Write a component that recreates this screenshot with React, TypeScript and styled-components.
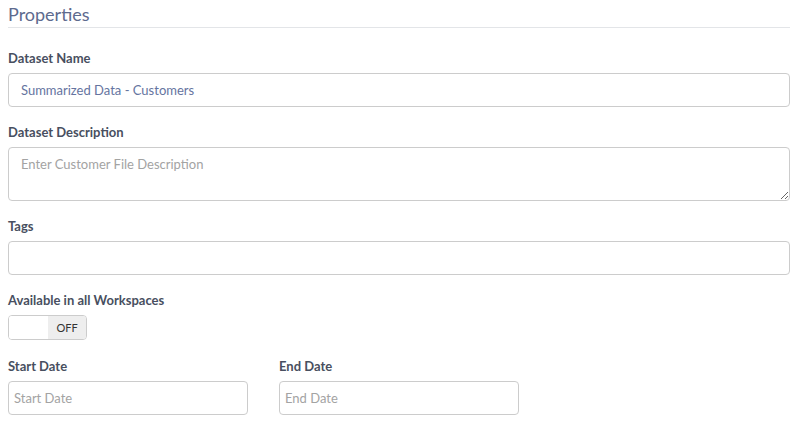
import React, { useState } from 'react';
import styled, { createGlobalStyle } from 'styled-components';

const GlobalStyle = createGlobalStyle`
  body {
    margin: 0;
    background: #ffffff;
    font-family: Lato, "Liberation Sans", sans-serif;
  }
  * {
    box-sizing: border-box;
  }
`;

const Container = styled.div`
  padding: 3px 10px 0px 8px;
  display: flex;
  flex-direction: column;
`;

const Title = styled.h3`
  margin: 0px;
  padding-bottom: 2px;
  font-size: 18px;
  font-weight: 400;
  line-height: 22px;
  color: #5d6a8e;
  border-bottom: 1px solid #e3e5e8;
`;

const Field = styled.div<{ $top?: number }>`
  display: flex;
  flex-direction: column;
  margin-top: ${(props) => props.$top ?? 17}px;
`;

const Label = styled.label`
  font-size: 13px;
  font-weight: 700;
  line-height: 16px;
  color: #484f60;
  margin-bottom: 7px;
`;

const Input = styled.input<{ $pad?: number }>`
  height: 34px;
  width: 100%;
  padding: 0px ${(props) => props.$pad ?? 12}px;
  border: 1px solid #cccccc;
  border-radius: 4px;
  font-family: Lato, "Liberation Sans", sans-serif;
  font-size: 13px;
  color: #6574a0;
  outline: none;
  &::placeholder {
    color: #a3a3a3;
  }
`;

const TextArea = styled.textarea`
  height: 54px;
  width: 100%;
  padding: 7px 12px;
  border: 1px solid #cccccc;
  border-radius: 4px;
  font-family: Lato, "Liberation Sans", sans-serif;
  font-size: 13px;
  line-height: 18px;
  color: #6574a0;
  outline: none;
  resize: vertical;
  display: block;
  &::placeholder {
    color: #a3a3a3;
  }
`;

const DateRow = styled.div`
  display: flex;
  gap: 31px;
`;

const DateField = styled(Field)`
  width: 240px;
`;

const Toggle = styled.button`
  width: 79px;
  height: 25px;
  padding: 0px;
  display: flex;
  border: 1px solid #cccccc;
  border-radius: 4px;
  background: #ffffff;
  overflow: hidden;
  cursor: pointer;
`;

const ToggleHandle = styled.span`
  width: 39px;
  height: 100%;
  background: #ffffff;
`;

const ToggleState = styled.span`
  flex: 1;
  height: 100%;
  display: flex;
  align-items: center;
  justify-content: center;
  background: #eeeeee;
  font-family: Lato, "Liberation Sans", sans-serif;
  font-size: 11px;
  color: #333333;
`;

const App = (): JSX.Element => {
  const [name, setName] = useState('Summarized Data - Customers');
  const [enabled, setEnabled] = useState(false);

  return (
    <Container>
      <GlobalStyle />
      <Title>Properties</Title>

      <Field $top={22}>
        <Label>Dataset Name</Label>
        <Input value={name} onChange={(e) => setName(e.target.value)} />
      </Field>

      <Field>
        <Label>Dataset Description</Label>
        <TextArea placeholder="Enter Customer File Description" />
      </Field>

      <Field>
        <Label>Tags</Label>
        <Input />
      </Field>

      <Field>
        <Label>Available in all Workspaces</Label>
        <Toggle onClick={() => setEnabled(!enabled)}>
          <ToggleHandle />
          <ToggleState>{enabled ? 'ON' : 'OFF'}</ToggleState>
        </Toggle>
      </Field>

      <DateRow>
        <DateField $top={18}>
          <Label>Start Date</Label>
          <Input $pad={5} placeholder="Start Date" />
        </DateField>
        <DateField $top={18}>
          <Label>End Date</Label>
          <Input $pad={5} placeholder="End Date" />
        </DateField>
      </DateRow>
    </Container>
  );
};

export default App;
